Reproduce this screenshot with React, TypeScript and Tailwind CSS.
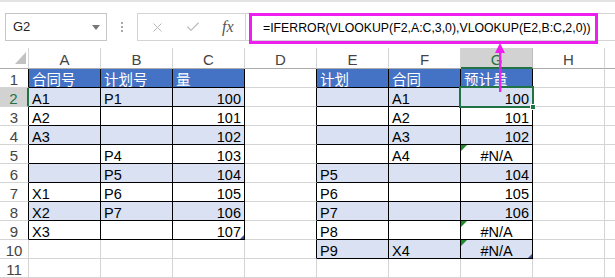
import { X, Check } from 'lucide-react';

const COLS = ['A', 'B', 'C', 'D', 'E', 'F', 'G', 'H'];

// rows 1..11, columns A..H
const DATA: string[][] = [
  ['合同号', '计划号', '量', '', '计划', '合同', '预计量', ''],
  ['A1', 'P1', '100', '', '', 'A1', '100', ''],
  ['A2', '', '101', '', '', 'A2', '101', ''],
  ['A3', '', '102', '', '', 'A3', '102', ''],
  ['', 'P4', '103', '', '', 'A4', '#N/A', ''],
  ['', 'P5', '104', '', 'P5', '', '104', ''],
  ['X1', 'P6', '105', '', 'P6', '', '105', ''],
  ['X2', 'P7', '106', '', 'P7', '', '106', ''],
  ['X3', '', '107', '', 'P8', '', '#N/A', ''],
  ['', '', '', '', 'P9', 'X4', '#N/A', ''],
  ['', '', '', '', '', '', '', ''],
];

function inTable(r: number, c: number) {
  const left = c <= 2 && r <= 9;
  const right = c >= 4 && c <= 6 && r <= 10;
  return left || right;
}

function cellClass(r: number, c: number, v: string) {
  const t = inTable(r, c);
  const bg = t && r === 1 ? 'bg-[#4472c4] text-white' : t && r % 2 === 0 ? 'bg-[#d9e1f2] text-black' : 'bg-white text-black';
  const br = t || (c === 3 && r <= 10) ? 'border-r-black' : 'border-r-[#d4d4d4]';
  const bb = t ? 'border-b-black' : 'border-b-[#d4d4d4]';
  let align = 'justify-start';
  if (/^\d+$/.test(v)) align = 'justify-end';
  if (v === '#N/A') align = 'justify-center';
  return `relative flex items-end px-[3px] border-r border-b ${br} ${bb} ${bg} ${align}`;
}

function ErrorMark() {
  return (
    <svg className="absolute left-0 top-0" width="6" height="6" viewBox="0 0 6 6">
      <polygon points="0,0 6,0 0,6" fill="#1f8a2a" />
    </svg>
  );
}

function TableEnd() {
  return (
    <svg className="absolute right-0 bottom-0" width="4" height="4" viewBox="0 0 4 4">
      <polygon points="4,0 4,4 0,4" fill="#3c4d9e" />
    </svg>
  );
}

export default function App() {
  return (
    <div className="relative w-[615px] h-[278px] overflow-hidden bg-white font-['Liberation_Sans','Noto_Sans_CJK_SC',sans-serif]">
      {/* formula bar */}
      <div className="h-[48px] flex items-start pt-[11px] border-t-2 border-[#e3e3e3]">
        <div className="ml-[5px] w-[102px] h-[28px] border border-[#c6c6c6] flex items-center justify-between pl-[7px] pr-[6px]">
          <span className="text-[13px] text-[#222]">G2</span>
          <svg width="8" height="5" viewBox="0 0 8 5">
            <polygon points="0,0 8,0 4,5" fill="#777" />
          </svg>
        </div>
        <div className="w-[30px] h-[28px] flex flex-col items-center justify-center gap-[2px]">
          <span className="w-[2px] h-[2px] bg-[#a8a8a8]" />
          <span className="w-[2px] h-[2px] bg-[#a8a8a8]" />
          <span className="w-[2px] h-[2px] bg-[#a8a8a8]" />
        </div>
        <div className="w-[108px] h-[28px] border border-r-0 border-[#d4d4d4] flex items-center pl-[12px]">
          <X className="w-[15px] h-[15px] text-[#b8b8b8]" strokeWidth={1.6} />
          <Check className="ml-[20px] w-[16px] h-[16px] text-[#b8b8b8]" strokeWidth={1.6} />
          <span className="ml-[21px] text-[16px] italic text-[#555] font-['Liberation_Serif',serif]">fx</span>
        </div>
        <div className="flex-1 h-[28px] border border-r-0 border-[#d4d4d4] pl-[3px]">
          <div className="-mt-[1px] w-[349px] h-[31px] border-[3px] border-[#ee1fee] flex items-center pl-[11px]">
            <span className="text-[12.3px] text-black whitespace-nowrap">=IFERROR(VLOOKUP(F2,A:C,3,0),VLOOKUP(E2,B:C,2,0))</span>
          </div>
        </div>
      </div>

      {/* sheet */}
      <div className="grid grid-cols-[29px_repeat(8,72px)_1fr] grid-rows-[21px_repeat(11,19px)]">
        <div className="relative border-r border-b border-r-[#d4d4d4] border-b-[#ababab]">
          <svg className="absolute left-[15px] top-[4px]" width="11" height="12" viewBox="0 0 11 12">
            <polygon points="11,0 11,12 0,12" fill="#c2c2c2" />
          </svg>
        </div>
        {COLS.map((col) => (
          <div
            key={col}
            className={
              col === 'G'
                ? 'flex items-end justify-center border-r border-b-2 border-r-[#bdbdbd] border-b-[#217346] bg-[#d2d2d2] text-[15px] leading-[15px] text-[#217346]'
                : 'flex items-end justify-center pb-[1px] border-r border-b border-r-[#d4d4d4] border-b-[#ababab] text-[15px] leading-[15px] text-[#444]'
            }
          >
            {col}
          </div>
        ))}
        <div className="border-b border-b-[#ababab]" />

        {DATA.map((row, i) => {
          const r = i + 1;
          return [
            <div
              key={`h${r}`}
              className={
                r === 2
                  ? 'flex items-end justify-center border-r-2 border-b border-r-[#217346] border-b-[#d4d4d4] bg-[#d2d2d2] text-[15px] leading-[15px] text-[#217346]'
                  : r <= 9
                    ? 'flex items-end justify-center border-r border-b border-r-black border-b-[#d4d4d4] text-[15px] leading-[15px] text-[#444]'
                    : 'flex items-end justify-center border-r border-b border-r-[#d4d4d4] border-b-[#d4d4d4] text-[15px] leading-[15px] text-[#444]'
              }
            >
              {r}
            </div>,
            ...row.map((v, c) => (
              <div key={`${r}-${c}`} className={cellClass(r, c, v)}>
                <span className="text-[14.5px] leading-[14px] whitespace-nowrap">{v}</span>
                {v === '#N/A' && <ErrorMark />}
                {((r === 9 && c === 2) || (r === 10 && c === 6)) && <TableEnd />}
                {r === 2 && c === 6 && (
                  <div className="absolute z-10 -left-[2px] -top-[2px] w-[75px] h-[22px] border-2 border-[#217346]">
                    <div className="absolute -right-[4px] -bottom-[4px] w-[6px] h-[6px] bg-[#217346] border border-white" />
                  </div>
                )}
              </div>
            )),
            <div key={`i${r}`} className="border-b border-b-[#d4d4d4]" />,
          ];
        })}
      </div>

      {/* annotation arrow */}
      <svg className="absolute z-20 left-[494px] top-[43px]" width="12" height="50" viewBox="0 0 12 50">
        <polygon points="6,0 1,10 11,10" fill="#ee1fee" />
        <rect x="5" y="9" width="2.4" height="40" fill="#ee1fee" />
      </svg>
    </div>
  );
}
